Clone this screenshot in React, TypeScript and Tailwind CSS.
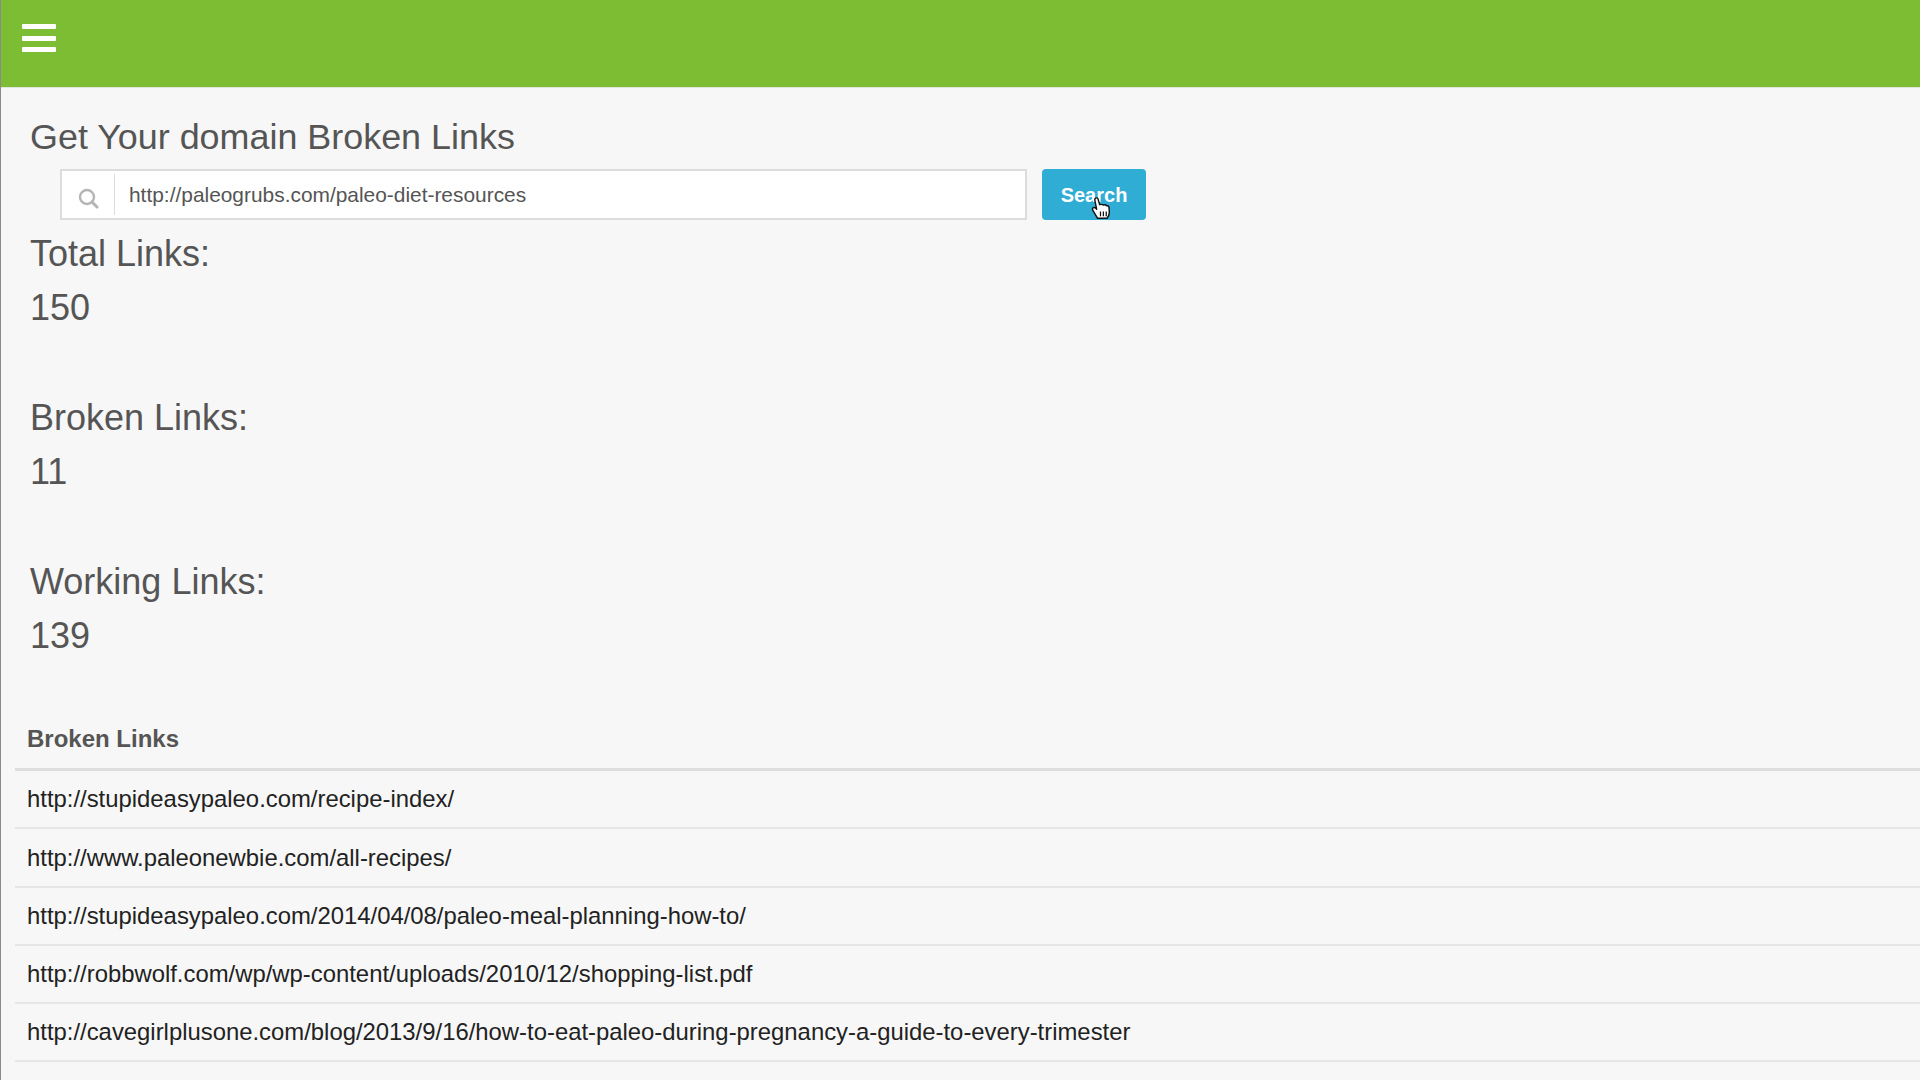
const brokenLinks = [
  'http://stupideasypaleo.com/recipe-index/',
  'http://www.paleonewbie.com/all-recipes/',
  'http://stupideasypaleo.com/2014/04/08/paleo-meal-planning-how-to/',
  'http://robbwolf.com/wp/wp-content/uploads/2010/12/shopping-list.pdf',
  'http://cavegirlplusone.com/blog/2013/9/16/how-to-eat-paleo-during-pregnancy-a-guide-to-every-trimester',
  'http://paleogrubs.com/paleo-diet-resources/meal-planning-guide',
]

const stats = [
  { label: 'Total Links:', value: '150' },
  { label: 'Broken Links:', value: '11' },
  { label: 'Working Links:', value: '139' },
]

function HandCursor() {
  return (
    <svg className="absolute left-[47px] top-[27px] h-[25px] w-[22px]" viewBox="0 0 22 26">
      <path
        d="M6 2.5c1-1 2.6-.6 3 .8l1.600 5.700c1.500-.5 3-.3 4 .4 1.300-.4 2.600-.1 3.300.8 1.200-.2 2.300.5 2.500 1.700l.3 5.100c0 2.600-1 4.500-2.300 6.200H8.500L3.600 15c-.8-1.200-.4-2.500.7-2.900.8-.3 1.700 0 2.400.7l.8.9L5.700 4.800c-.2-.9 0-1.700.3-2.300z"
        fill="#fff"
        stroke="#111"
        strokeWidth="1.500"
        strokeLinejoin="round"
      />
      <path d="M11.500 16v5M14.500 16v5M17.500 16v5" stroke="#111" strokeWidth="1.300" />
    </svg>
  )
}

export default function App() {
  return (
    <div className="h-[1080px] w-[1920px] overflow-hidden border-l border-l-[#8a8a8a] bg-[#f7f7f7] font-['Liberation_Sans',Arial,sans-serif] text-[#555]">
      {/* Top bar */}
      <div className="flex h-[88px] items-start border-b border-b-[#e2e5de] bg-[#7dbd33] pl-[21px] pt-[24px]">
        <div className="flex h-[28px] w-[34px] flex-col justify-between">
          <span className="h-[5px] rounded-[1px] bg-white" />
          <span className="h-[5px] rounded-[1px] bg-white" />
          <span className="h-[5px] rounded-[1px] bg-white" />
        </div>
      </div>

      <div className="pl-[29px] pt-[28px]">
        <h1 className="text-[35.9px] leading-[42px]">Get Your domain Broken Links</h1>

        {/* Search */}
        <div className="mt-[11px] flex items-start pl-[30px]">
          <div className="flex h-[51px] w-[967px] items-center border-2 border-[#dcdcdc] bg-white">
            <div className="flex h-[41px] w-[53px] items-center justify-center border-r border-r-[#dcdcdc] pt-[6px]">
              <svg className="h-[22px] w-[22px]" viewBox="0 0 22 22" fill="none" stroke="#b5b5b5">
                <circle cx="10" cy="10" r="7" strokeWidth="2.400" />
                <path d="M15 15l5 5" strokeWidth="3" strokeLinecap="round" />
              </svg>
            </div>
            <span className="pl-[14px] text-[20.9px] text-[#555]">http://paleogrubs.com/paleo-diet-resources</span>
          </div>
          <button className="relative ml-[15px] h-[51px] w-[104px] rounded-[4px] bg-[#2fadd4] text-[20px] font-bold text-white">
            Search
            <HandCursor />
          </button>
        </div>

        {/* Stats */}
        <div className="pt-[5px]">
          {stats.map((s) => (
            <div key={s.label} className="mb-[68px] mt-[8px]">
              <div className="text-[36px] leading-[42px]">{s.label}</div>
              <div className="mt-[12px] text-[36px] leading-[42px]">{s.value}</div>
            </div>
          ))}
        </div>
      </div>

      {/* Table */}
      <div className="ml-[14px] -mt-[1px]">
        <div className="border-b-[3px] border-b-[#dedede] pb-[14px] pl-[12px] text-[24px] font-bold leading-[30px]">Broken Links</div>
        {brokenLinks.map((url) => (
          <div key={url} className="flex h-[58.3px] items-center border-b-2 border-b-[#e6e6e6] pl-[12px] text-[23.87px] text-[#222]">
            {url}
          </div>
        ))}
      </div>
    </div>
  )
}
